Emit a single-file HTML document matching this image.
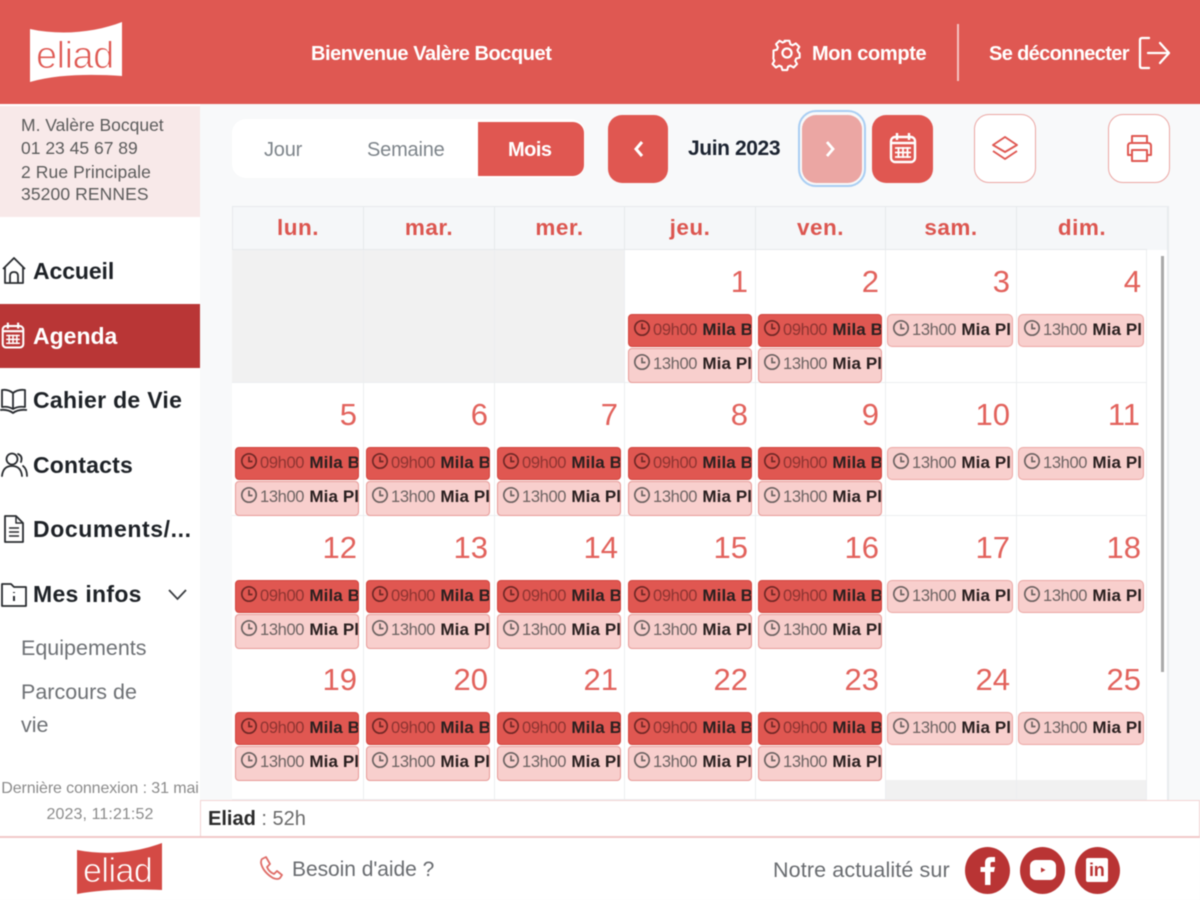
<!DOCTYPE html>
<html lang="fr">
<head>
<meta charset="utf-8">
<title>Eliad Agenda</title>
<style>
*{box-sizing:border-box}
html{margin:0;padding:0;width:1200px;height:900px;overflow:hidden}
body{margin:0;padding:0;width:1200px;height:900px;overflow:hidden;background:#f8f9fa;position:relative;font-family:"Liberation Sans",sans-serif;color:#555;}
#o{position:absolute;left:0;top:0;width:1200px;height:900px;overflow:hidden}
#p{position:absolute;left:0;top:0;width:1200px;height:900px;filter:blur(.55px)}
.t{position:absolute;white-space:nowrap}
.b{position:absolute}
svg{position:absolute;overflow:visible}
.hd{color:#fff;font-weight:bold;font-size:20px;letter-spacing:-.45px;top:43px}
.info{left:21px;font-size:17.5px;color:#5c5c5c;letter-spacing:0}
.nav{left:33px;font-size:23px;font-weight:bold;color:#1e2227;letter-spacing:.3px}
.sub{left:21px;font-size:21.5px;color:#6e7175;letter-spacing:0}
.tab{top:139px;font-size:20px;color:#7e858b;letter-spacing:-.2px}
.btn{position:absolute;top:115px;width:60px;height:68px;border-radius:14px;background:#e05751}
.obtn{position:absolute;top:114px;width:62px;height:69px;border-radius:15px;background:#fff;border:1.5px solid #eba6a3}
.day{position:absolute;top:206px;height:44px;line-height:42px;text-align:center;color:#dc5650;font-size:22.5px;font-weight:bold;background:#f5f7f9;border-right:1.5px solid #e6e9ec;border-top:1.5px solid #e6e9ec;border-bottom:1.5px solid #e6e9ec;letter-spacing:.5px}
.c{position:absolute;width:131px;height:133px;background:#fff;border-right:1.5px solid #eceef0;border-bottom:1.5px solid #eceef0}
.g{background:#f1f1f1}
.n{position:absolute;text-align:right;width:60px;font-size:31px;color:#e2625c;line-height:36px}
.e{position:absolute;width:124px;height:33px;border-radius:4px;overflow:hidden;white-space:nowrap;font-size:16.5px;line-height:29px;padding-left:24px;letter-spacing:-.35px}
.e b{color:#2a2020;font-size:17px;letter-spacing:.1px;margin-left:1px}
.e svg{left:4px;top:4px;width:18px;height:18px}
.r{background:#e05751;border:1px solid #d2453f;color:#8d3431;height:33px}
.r svg{color:#702826}
.l{background:#f8cfcd;border:1.5px solid #e79a97;color:#6d6362;height:35px}
.w{background:#f8cfcd;border:1.5px solid #eba6a3;color:#6d6362;width:126px;height:33px;border-radius:5px}
.so{position:absolute;top:847px;width:45px;height:47px;border-radius:50%;background:#b93434}
</style>
</head>
<body>
<div id="o">
<div id="p">
<svg width="0" height="0" style="position:absolute"><defs>
<symbol id="ck" viewBox="0 0 18 18"><g fill="none" stroke="currentColor" stroke-width="1.7"><circle cx="9" cy="9" r="7.2"/><path d="M9 4.5V9.5H12.5"/></g></symbol>
<symbol id="cal" viewBox="0 0 28 32"><g fill="none" stroke="currentColor" stroke-width="2.4"><rect x="2" y="5" width="24" height="25" rx="4"/><path d="M8 1v7M20 1v7M2 11h24" /><path d="M6 16h16M6 20.500h16M6 25h16M9.500 15v11M14 15v11M18.500 15v11" stroke-width="1.800"/></g></symbol>
</defs></svg>

<!-- header -->
<div class="b" style="left:-10px;top:-10px;width:1220px;height:114px;background:#df5852"></div>
<svg style="left:0;top:0" width="140" height="104">
<path d="M30 29C62 36 96 32 122 22V76C92 74 58 74 30 82Z" fill="#fff"/>
<text x="36" y="68" font-family="Liberation Sans" font-size="38" fill="#df5852" stroke="#fff" stroke-width="1" letter-spacing="-.5">eliad</text>
</svg>
<div class="t hd" style="left:311px">Bienvenue Valère Bocquet</div>
<svg style="left:771px;top:36px" width="32" height="34" viewBox="0 0 24 24" fill="none" stroke="#fff" stroke-width="1.700" stroke-linejoin="round"><circle cx="12" cy="12" r="3.400"/><path d="M10 2h4l.7 2.900 1.900.8 2.600-1.500 2.800 2.800-1.500 2.600.8 1.900 1 .7v3.600l-2.800.7-.8 1.900 1.500 2.600-2.800 2.800-2.600-1.500-1.900.8-.7 2.800h-4l-.7-2.800-1.900-.8-2.600 1.500-2.800-2.800 1.500-2.600-.8-1.900L1 14V10l2.800-.7.8-1.900-1.500-2.600 2.800-2.800 2.600 1.500 1.900-.8z" transform="translate(12 12) scale(.92) translate(-12 -12)"/></svg>
<div class="t hd" style="left:812px;letter-spacing:-.35px">Mon compte</div>
<div class="b" style="left:957px;top:24px;width:2px;height:57px;background:#f4c3c0"></div>
<div class="t hd" style="left:989px;letter-spacing:-.65px">Se déconnecter</div>
<svg style="left:1138px;top:36px" width="34" height="34" fill="none" stroke="#fff" stroke-width="2.300" stroke-linecap="round" stroke-linejoin="round"><path d="M11 2H4Q2 2 2 4V30Q2 32 4 32H11"/><path d="M10 17H31M22 7L31 17L22 27" /></svg>

<!-- sidebar -->
<div class="b" style="left:-10px;top:104px;width:210px;height:732px;background:#fff"></div>
<div class="b" style="left:-10px;top:106px;width:210px;height:111px;background:#f8e9e9"></div>
<div class="t info" style="top:115px">M. Valère Bocquet</div>
<div class="t info" style="top:138px">01 23 45 67 89</div>
<div class="t info" style="top:162px;letter-spacing:.1px">2 Rue Principale</div>
<div class="t info" style="top:184px;letter-spacing:.1px">35200 RENNES</div>

<div class="b" style="left:-10px;top:304px;width:210px;height:64px;background:#b93636"></div>

<svg style="left:2px;top:257px" width="24" height="28" fill="none" stroke="#2a2d31" stroke-width="1.800" stroke-linejoin="round"><path d="M1 12L12 1L23 12M3 10V26H21V10"/><path d="M8 26V19Q8 15 12 15Q16 15 16 19V26"/></svg>
<div class="t nav" style="top:258px;letter-spacing:-.1px">Accueil</div>

<svg style="left:1px;top:321px;color:#fff" width="24" height="29"><use href="#cal" width="24" height="29"/></svg>
<div class="t nav" style="top:323px;color:#fff;letter-spacing:0">Agenda</div>

<svg style="left:0;top:387px" width="27" height="28" fill="none" stroke="#2a2d31" stroke-width="1.800" stroke-linejoin="round"><path d="M13 6Q8 2 2 3V20Q8 19 13 22Q18 19 25 20V3Q18 2 13 6V22"/><path d="M0 23Q8 22 13 26Q18 22 27 23"/></svg>
<div class="t nav" style="top:387px">Cahier de Vie</div>

<svg style="left:1px;top:452px" width="27" height="25" fill="none" stroke="#2a2d31" stroke-width="1.800" stroke-linecap="round"><circle cx="11" cy="7" r="5.500"/><path d="M1 24Q2 14 11 14Q20 14 21 24M17 2Q22 4 20 10M22 14Q26 17 26 24"/></svg>
<div class="t nav" style="top:452px;letter-spacing:.2px">Contacts</div>

<svg style="left:3px;top:515px" width="21" height="28" fill="none" stroke="#2a2d31" stroke-width="1.800" stroke-linejoin="round"><path d="M2 1H13L20 8V27H2Z"/><path d="M13 1V8H20M6 13H16M6 17H16M6 21H16" stroke-width="1.500"/></svg>
<div class="t nav" style="top:516px;letter-spacing:.6px">Documents/...</div>

<svg style="left:1px;top:581px" width="26" height="26" fill="none" stroke="#2a2d31" stroke-width="1.800" stroke-linejoin="round"><path d="M1 25V3H10L13 6H25V25Z"/><path d="M13 11V12M13 15V20" stroke-width="2"/></svg>
<div class="t nav" style="top:581px">Mes infos</div>
<svg style="left:168px;top:589px" width="19" height="12" fill="none" stroke="#3a3d41" stroke-width="1.800"><path d="M1 1L9.500 10L18 1"/></svg>

<div class="t sub" style="top:636px">Equipements</div>
<div class="t sub" style="top:680px">Parcours de</div>
<div class="t sub" style="top:713px">vie</div>
<div class="t" style="left:0;width:200px;text-align:center;top:780px;font-size:16px;color:#8b8b8b;letter-spacing:-.1px">Dernière connexion : 31 mai</div>
<div class="t" style="left:0;width:200px;text-align:center;top:806px;font-size:16px;color:#8b8b8b;letter-spacing:.1px">2023, 11:21:52</div>

<!-- toolbar -->
<div class="b" style="left:232px;top:119px;width:353px;height:59px;background:#fff;border-radius:14px"></div>
<div class="b" style="left:478px;top:122px;width:106px;height:54px;background:#e05751;border-radius:0 11px 11px 0"></div>
<div class="t tab" style="left:264px">Jour</div>
<div class="t tab" style="left:367px">Semaine</div>
<div class="t tab" style="left:508px;color:#fff;font-weight:bold;letter-spacing:-.5px">Mois</div>
<div class="btn" style="left:608px"></div>
<svg style="left:633px;top:140px" width="11" height="18" fill="none" stroke="#fff" stroke-width="3"><path d="M9 2L3 9L9 16"/></svg>
<div class="t" style="left:688px;top:137px;font-size:21px;font-weight:bold;color:#1b2330;letter-spacing:-.4px">Juin 2023</div>
<div class="b" style="left:798px;top:110px;width:68px;height:77px;border-radius:18px;border:2px solid #a8cdf2"></div>
<div class="btn" style="left:802px;background:#eba6a3;width:60px"></div>
<svg style="left:825px;top:140px" width="11" height="18" fill="none" stroke="#fff" stroke-width="2.800"><path d="M2 2L8 9L2 16"/></svg>
<div class="btn" style="left:872px;width:61px"></div>
<svg style="left:889px;top:132px;color:#fff" width="28" height="32"><use href="#cal" width="28" height="32"/></svg>
<div class="obtn" style="left:974px"></div>
<svg style="left:991px;top:135px" width="28" height="28" fill="none" stroke="#df5852" stroke-width="1.900" stroke-linejoin="round"><path d="M14 2L26 10L14 17L2 10Z"/><path d="M2 16L14 24L26 16"/></svg>
<div class="obtn" style="left:1108px"></div>
<svg style="left:1126px;top:134px" width="27" height="29" fill="none" stroke="#df5852" stroke-width="2" stroke-linejoin="round"><path d="M6 9V2H21V9M6 21H2V12Q2 9 5 9H22Q25 9 25 12V21H21"/><rect x="6" y="16" width="15" height="11"/></svg>

<!-- calendar headers -->
<div class="b" style="left:232px;top:206px;width:936px;height:44px;background:#f5f7f9;border:1.500px solid #e8ebee;border-bottom:none"></div>
<div class="day" style="left:232px;width:132px;border-left:1.500px solid #e6e9ec">lun.</div>
<div class="day" style="left:364px;width:131px">mar.</div>
<div class="day" style="left:495px;width:130px">mer.</div>
<div class="day" style="left:625px;width:131px">jeu.</div>
<div class="day" style="left:756px;width:130px">ven.</div>
<div class="day" style="left:886px;width:131px">sam.</div>
<div class="day" style="left:1017px;width:130px;border-right:none">dim.</div>
<div class="b" style="left:1147px;top:250px;width:21px;height:550px;background:#fff"></div>
<div class="b" style="left:1161px;top:256px;width:3px;height:416px;background:#a9a9a9"></div>
<div class="b" style="left:1167px;top:206px;width:2px;height:594px;background:#e8ebee"></div>

<!-- cells -->
<div class="c g" style="left:232px;top:250px;width:132px"></div><div class="c g" style="left:364px;top:250px"></div><div class="c g" style="left:495px;top:250px;width:130px"></div><div class="c" style="left:625px;top:250px"></div><div class="c" style="left:756px;top:250px;width:130px"></div><div class="c" style="left:886px;top:250px"></div><div class="c" style="left:1017px;top:250px;width:130px"></div>
<div class="c" style="left:232px;top:383px;width:132px"></div><div class="c" style="left:364px;top:383px"></div><div class="c" style="left:495px;top:383px;width:130px"></div><div class="c" style="left:625px;top:383px"></div><div class="c" style="left:756px;top:383px;width:130px"></div><div class="c" style="left:886px;top:383px"></div><div class="c" style="left:1017px;top:383px;width:130px"></div>
<div class="c" style="left:232px;top:516px;width:132px"></div><div class="c" style="left:364px;top:516px"></div><div class="c" style="left:495px;top:516px;width:130px"></div><div class="c" style="left:625px;top:516px"></div><div class="c" style="left:756px;top:516px;width:130px"></div><div class="c" style="left:886px;top:516px"></div><div class="c" style="left:1017px;top:516px;width:130px"></div>
<div class="c" style="left:232px;top:648px;width:132px"></div><div class="c" style="left:364px;top:648px"></div><div class="c" style="left:495px;top:648px;width:130px"></div><div class="c" style="left:625px;top:648px"></div><div class="c" style="left:756px;top:648px;width:130px"></div><div class="c" style="left:886px;top:648px"></div><div class="c" style="left:1017px;top:648px;width:130px"></div>
<div class="c" style="left:232px;top:780px;width:132px;height:20px"></div><div class="c" style="left:364px;top:780px;height:20px"></div><div class="c" style="left:495px;top:780px;width:130px;height:20px"></div><div class="c" style="left:625px;top:780px;height:20px"></div><div class="c" style="left:756px;top:780px;width:130px;height:20px"></div><div class="c g" style="left:886px;top:780px;height:20px"></div><div class="c g" style="left:1017px;top:780px;width:130px;height:20px"></div>

<!-- numbers -->
<div class="n" style="left:688px;top:264px">1</div><div class="n" style="left:819px;top:264px">2</div><div class="n" style="left:950px;top:264px">3</div><div class="n" style="left:1081px;top:264px">4</div>
<div class="n" style="left:297px;top:397px">5</div><div class="n" style="left:428px;top:397px">6</div><div class="n" style="left:558px;top:397px">7</div><div class="n" style="left:688px;top:397px">8</div><div class="n" style="left:819px;top:397px">9</div><div class="n" style="left:950px;top:397px">10</div><div class="n" style="left:1080px;top:397px">11</div>
<div class="n" style="left:297px;top:530px">12</div><div class="n" style="left:428px;top:530px">13</div><div class="n" style="left:558px;top:530px">14</div><div class="n" style="left:688px;top:530px">15</div><div class="n" style="left:819px;top:530px">16</div><div class="n" style="left:950px;top:530px">17</div><div class="n" style="left:1081px;top:530px">18</div>
<div class="n" style="left:297px;top:662px">19</div><div class="n" style="left:428px;top:662px">20</div><div class="n" style="left:558px;top:662px">21</div><div class="n" style="left:688px;top:662px">22</div><div class="n" style="left:819px;top:662px">23</div><div class="n" style="left:950px;top:662px">24</div><div class="n" style="left:1081px;top:662px">25</div>

<!-- events row 1 -->
<div class="e r" style="left:628px;top:314px"><svg><use href="#ck"/></svg>09h00 <b>Mila Bo</b></div>
<div class="e l" style="left:628px;top:348px"><svg><use href="#ck"/></svg>13h00 <b>Mia Pla</b></div>
<div class="e r" style="left:758px;top:314px"><svg><use href="#ck"/></svg>09h00 <b>Mila Bo</b></div>
<div class="e l" style="left:758px;top:348px"><svg><use href="#ck"/></svg>13h00 <b>Mia Pla</b></div>
<div class="e w" style="left:887px;top:314px"><svg><use href="#ck"/></svg>13h00 <b>Mia Pl</b></div>
<div class="e w" style="left:1018px;top:314px"><svg><use href="#ck"/></svg>13h00 <b>Mia Pl</b></div>

<!-- events row 2 -->
<div class="e r" style="left:235px;top:447px"><svg><use href="#ck"/></svg>09h00 <b>Mila Bo</b></div>
<div class="e l" style="left:235px;top:481px"><svg><use href="#ck"/></svg>13h00 <b>Mia Pla</b></div>
<div class="e r" style="left:366px;top:447px"><svg><use href="#ck"/></svg>09h00 <b>Mila Bo</b></div>
<div class="e l" style="left:366px;top:481px"><svg><use href="#ck"/></svg>13h00 <b>Mia Pla</b></div>
<div class="e r" style="left:497px;top:447px"><svg><use href="#ck"/></svg>09h00 <b>Mila Bo</b></div>
<div class="e l" style="left:497px;top:481px"><svg><use href="#ck"/></svg>13h00 <b>Mia Pla</b></div>
<div class="e r" style="left:628px;top:447px"><svg><use href="#ck"/></svg>09h00 <b>Mila Bo</b></div>
<div class="e l" style="left:628px;top:481px"><svg><use href="#ck"/></svg>13h00 <b>Mia Pla</b></div>
<div class="e r" style="left:758px;top:447px"><svg><use href="#ck"/></svg>09h00 <b>Mila Bo</b></div>
<div class="e l" style="left:758px;top:481px"><svg><use href="#ck"/></svg>13h00 <b>Mia Pla</b></div>
<div class="e w" style="left:887px;top:447px"><svg><use href="#ck"/></svg>13h00 <b>Mia Pl</b></div>
<div class="e w" style="left:1018px;top:447px"><svg><use href="#ck"/></svg>13h00 <b>Mia Pl</b></div>

<!-- events row 3 -->
<div class="e r" style="left:235px;top:580px"><svg><use href="#ck"/></svg>09h00 <b>Mila Bo</b></div>
<div class="e l" style="left:235px;top:614px"><svg><use href="#ck"/></svg>13h00 <b>Mia Pla</b></div>
<div class="e r" style="left:366px;top:580px"><svg><use href="#ck"/></svg>09h00 <b>Mila Bo</b></div>
<div class="e l" style="left:366px;top:614px"><svg><use href="#ck"/></svg>13h00 <b>Mia Pla</b></div>
<div class="e r" style="left:497px;top:580px"><svg><use href="#ck"/></svg>09h00 <b>Mila Bo</b></div>
<div class="e l" style="left:497px;top:614px"><svg><use href="#ck"/></svg>13h00 <b>Mia Pla</b></div>
<div class="e r" style="left:628px;top:580px"><svg><use href="#ck"/></svg>09h00 <b>Mila Bo</b></div>
<div class="e l" style="left:628px;top:614px"><svg><use href="#ck"/></svg>13h00 <b>Mia Pla</b></div>
<div class="e r" style="left:758px;top:580px"><svg><use href="#ck"/></svg>09h00 <b>Mila Bo</b></div>
<div class="e l" style="left:758px;top:614px"><svg><use href="#ck"/></svg>13h00 <b>Mia Pla</b></div>
<div class="e w" style="left:887px;top:580px"><svg><use href="#ck"/></svg>13h00 <b>Mia Pl</b></div>
<div class="e w" style="left:1018px;top:580px"><svg><use href="#ck"/></svg>13h00 <b>Mia Pl</b></div>

<!-- events row 4 -->
<div class="e r" style="left:235px;top:712px"><svg><use href="#ck"/></svg>09h00 <b>Mila Bo</b></div>
<div class="e l" style="left:235px;top:746px"><svg><use href="#ck"/></svg>13h00 <b>Mia Pla</b></div>
<div class="e r" style="left:366px;top:712px"><svg><use href="#ck"/></svg>09h00 <b>Mila Bo</b></div>
<div class="e l" style="left:366px;top:746px"><svg><use href="#ck"/></svg>13h00 <b>Mia Pla</b></div>
<div class="e r" style="left:497px;top:712px"><svg><use href="#ck"/></svg>09h00 <b>Mila Bo</b></div>
<div class="e l" style="left:497px;top:746px"><svg><use href="#ck"/></svg>13h00 <b>Mia Pla</b></div>
<div class="e r" style="left:628px;top:712px"><svg><use href="#ck"/></svg>09h00 <b>Mila Bo</b></div>
<div class="e l" style="left:628px;top:746px"><svg><use href="#ck"/></svg>13h00 <b>Mia Pla</b></div>
<div class="e r" style="left:758px;top:712px"><svg><use href="#ck"/></svg>09h00 <b>Mila Bo</b></div>
<div class="e l" style="left:758px;top:746px"><svg><use href="#ck"/></svg>13h00 <b>Mia Pla</b></div>
<div class="e w" style="left:887px;top:712px"><svg><use href="#ck"/></svg>13h00 <b>Mia Pl</b></div>
<div class="e w" style="left:1018px;top:712px"><svg><use href="#ck"/></svg>13h00 <b>Mia Pl</b></div>

<!-- total bar -->
<div class="b" style="left:200px;top:800px;width:1000px;height:37px;background:#fff;border:1.500px solid #f3d5d4;border-bottom:none"></div>
<div class="t" style="left:208px;top:808px;font-size:20px;color:#6b6b6b"><b style="color:#2a2a2a">Eliad</b> : 52h</div>

<!-- footer -->
<div class="b" style="left:-10px;top:836px;width:1210px;height:64px;background:#fff;border-top:2px solid #f1c9c8"></div>
<svg style="left:76px;top:842px" width="88" height="54">
<path d="M1 8C32 14 62 10 86 1V48C58 47 28 47 1 52Z" fill="#d44a45"/>
<text x="7" y="40" font-family="Liberation Sans" font-size="34" fill="#fff" stroke="#d44a45" stroke-width=".8" letter-spacing="-.5">eliad</text>
</svg>
<svg style="left:260px;top:856px" width="24" height="25" fill="none" stroke="#df6d68" stroke-width="1.800" stroke-linejoin="round"><path d="M2 3L6 1L10 8L7 11Q9 16 14 18L17 15L22 19L20 22Q18 24 13 22Q3 16 1 7Q1 4 2 3Z"/></svg>
<div class="t" style="left:292px;top:858px;font-size:21px;color:#696c70;letter-spacing:-.05px">Besoin d'aide ?</div>
<div class="t" style="left:773px;top:858px;font-size:21.500px;color:#696c70;letter-spacing:.12px">Notre actualité sur</div>

<div class="so" style="left:965px"></div>
<svg style="left:978px;top:855px" width="20" height="31"><path d="M7 30V17H2.500V12H7V8Q7 2 13 2H17V7H14Q12.500 7 12.500 9V12H17L16 17H12.500V30Z" fill="#fff"/></svg>
<div class="so" style="left:1020px"></div>
<svg style="left:1029px;top:859px" width="28" height="22"><rect x="1" y="1" width="26" height="20" rx="6" fill="#fff"/><path d="M12 8.500L16.500 11L12 13.500Z" fill="#b93434"/></svg>
<div class="so" style="left:1075px"></div>
<div class="b" style="left:1086px;top:858px;width:22px;height:24px;background:#fff;border-radius:2px"></div>
<div class="t" style="left:1089px;top:860px;font-size:18px;font-weight:bold;color:#b93434;letter-spacing:-.3px">in</div>
</div>
</div>
</body>
</html>
